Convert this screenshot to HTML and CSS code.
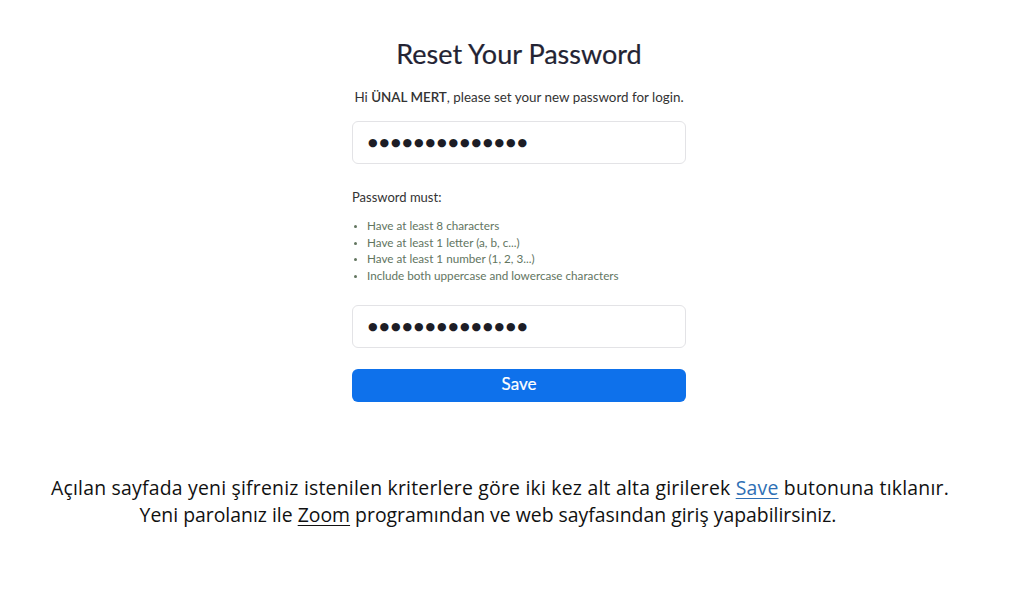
FILE: index.html
```html
<!DOCTYPE html>
<html lang="en">
<head>
<meta charset="utf-8">
<title>Reset Your Password</title>
<link rel="stylesheet" href="styles.css">
</head>
<body>
<main class="page">
  <section class="form">
    <h1 class="title">Reset Your Password</h1>
    <p class="greeting">Hi <strong>ÜNAL MERT</strong>, please set your new password for login.</p>
    <div class="field"><span class="dots">●●●●●●●●●●●●●●</span></div>
    <p class="must">Password must:</p>
    <ul class="rules">
      <li>Have at least 8 characters</li>
      <li>Have at least 1 letter (a, b, c...)</li>
      <li>Have at least 1 number (1, 2, 3...)</li>
      <li>Include both uppercase and lowercase characters</li>
    </ul>
    <div class="field field-2"><span class="dots">●●●●●●●●●●●●●●</span></div>
    <button class="save" type="button">Save</button>
  </section>
  <section class="note">
    <p class="line-1">Açılan sayfada yeni şifreniz istenilen kriterlere göre iki kez alt alta girilerek <span class="link spell">Save</span> butonuna tıklanır.</p>
    <p class="line-2">Yeni parolanız ile <span class="under spell">Zoom</span> programından ve web sayfasından giriş yapabilirsiniz.</p>
  </section>
</main>
</body>
</html>
```

FILE: styles.css
```css
* { box-sizing: border-box; }
html, body { margin: 0; padding: 0; background: #fff; }
body { width: 1024px; height: 591px; overflow: hidden; }
.page { display: flex; flex-direction: column; align-items: center; }
.form {
  width: 334px;
  margin-left: 14px;
  padding-top: 37px;
  font-family: Lato, "Open Sans", sans-serif;
  color: #232333;
  display: flex;
  flex-direction: column;
}
.title {
  margin: 0;
  font-size: 27px;
  font-weight: 400;
  line-height: 34px;
  text-align: center;
  color: #232333;
  -webkit-text-stroke: 0.2px #232333;
}
.greeting {
  margin: 17px 0 0;
  font-size: 13.4px;
  line-height: 18px;
  text-align: center;
  color: #333;
}
.greeting strong { font-weight: 600; }
.field {
  margin-top: 15px;
  height: 43px;
  border: 1px solid #e3e3e6;
  border-radius: 6px;
  display: flex;
  align-items: center;
  padding-left: 15px;
}
.dots {
  font-family: "DejaVu Sans", sans-serif;
  font-size: 11px;
  letter-spacing: 1.9px;
  color: #1d1d26;
}
.must {
  margin: 24px 0 0;
  font-size: 13px;
  line-height: 18px;
  color: #333;
}
.rules {
  margin: 11px 0 0;
  padding-left: 15px;
  font-size: 11.7px;
  line-height: 16.7px;
  color: #62755f;
}
.rules li::marker { font-size: 9px; }
.field-2 { margin-top: 21px; }
.save {
  margin-top: 21px;
  height: 33px;
  border: 0;
  border-radius: 6px;
  background: #0e71eb;
  color: #fff;
  font-family: Lato, sans-serif;
  font-size: 17px;
  padding: 0 0 3px;
  -webkit-text-stroke: 0.2px #fff;
}
.note {
  margin-top: 72px;
  font-family: "Open Sans", sans-serif;
  font-size: 19.4px;
  line-height: 27px;
  color: #111;
  text-align: center;
  width: 1024px;
}
.note p { margin: 0; }
.line-1 { padding-right: 24px; letter-spacing: 0.22px; }
.line-2 { padding-right: 48px; }
.link { color: #2e6fb5; text-decoration: underline; }
.under { text-decoration: underline; }
.spell { text-decoration-thickness: 1px; text-underline-offset: 3px; }
```
